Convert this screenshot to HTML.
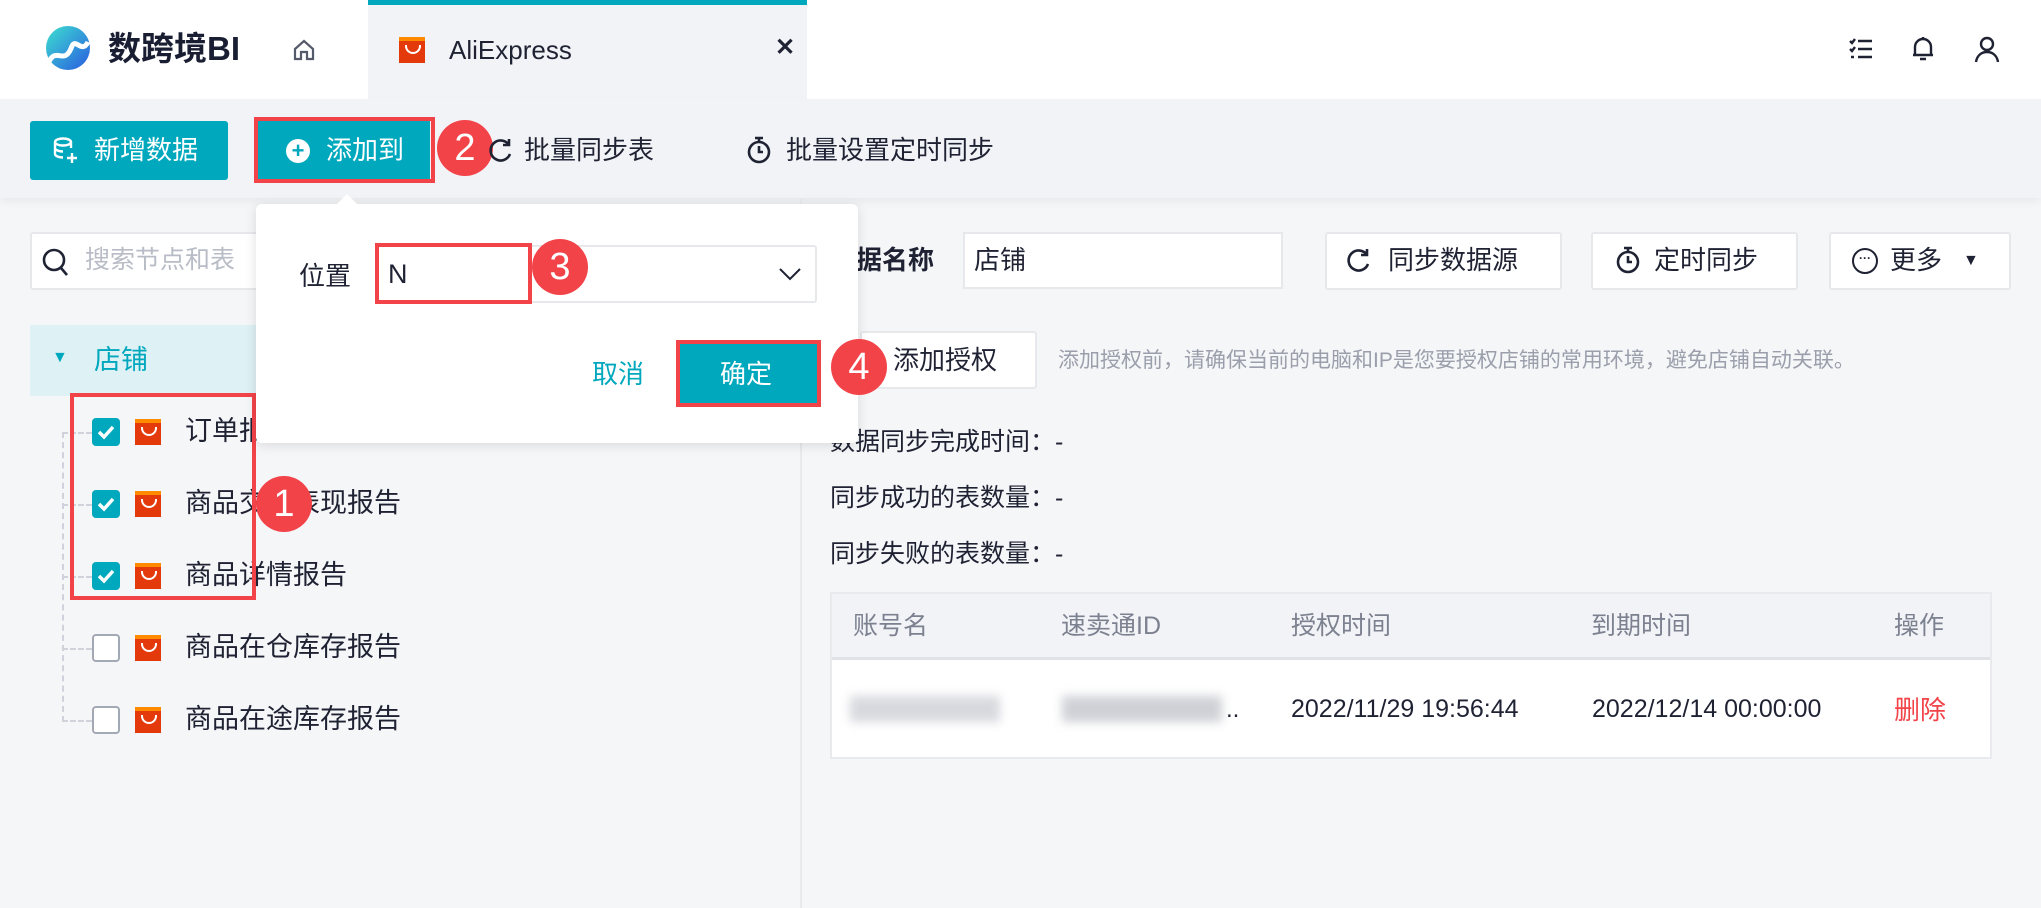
<!DOCTYPE html>
<html><head><meta charset="utf-8"><style>
*{box-sizing:border-box;margin:0;padding:0}
body{width:2041px;height:908px;overflow:hidden;background:#f5f6f8;font-family:"Liberation Sans","Noto Sans CJK SC",sans-serif;color:#1f2233;position:relative}
.a{position:absolute}
.t{position:absolute;white-space:nowrap;line-height:1}
.btnw{position:absolute;background:#fff;border:2px solid #e6e8ec;border-radius:3px}
.red{position:absolute;border:4px solid #f24349}
.circ{position:absolute;width:56px;height:56px;border-radius:50%;background:#f24349;color:#fff;font-size:38px;text-align:center;line-height:56px}
.cb{position:absolute;width:28px;height:28px;border-radius:4px;background:#00a8bd}
.cbu{position:absolute;width:28px;height:28px;border-radius:4px;border:2px solid #a2a8b4;background:#fff}
.ae{position:absolute;width:26px;height:26px;background:#e43a0b;border-top:4px solid #ff8a00}
.ae:after{content:"";position:absolute;left:6px;top:4px;width:12px;height:7px;border:2px solid #fff;border-top:none;border-radius:0 0 8px 8px}
</style></head><body>
<div class="a" style="left:0;top:0;width:2041px;height:99px;background:#fff"></div>
<svg class="a" style="left:42px;top:24px" width="50" height="52" viewBox="0 0 50 52"><defs><linearGradient id="g" x1="0" y1="0" x2="1" y2="1"><stop offset="0" stop-color="#3de0d0"/><stop offset="1" stop-color="#2a5be0"/></linearGradient></defs><circle cx="26" cy="24" r="22" fill="url(#g)"/><path d="M6 40 C14 20 22 44 30 22 C34 14 40 30 46 18" stroke="#fff" stroke-width="5" fill="none"/></svg>
<div class="t" style="left:108px;top:32px;font-size:33px;font-weight:bold;color:#1a1e33">数跨境BI</div>
<svg class="a" style="left:292px;top:38px" width="24" height="24" viewBox="0 0 24 24"><path d="M3 11 L12 3 L21 11 V21 H15 V14 H9 V21 H3 Z" fill="none" stroke="#555b6b" stroke-width="2.2"/></svg>
<div class="a" style="left:368px;top:0;width:439px;height:99px;background:#f2f3f7;border-top:5px solid #00a8bd"></div>
<div class="ae" style="left:399px;top:37px"></div>
<div class="t" style="left:449px;top:37px;font-size:26px">AliExpress</div>
<div class="t" style="left:775px;top:36px;font-size:24px;font-weight:bold">✕</div>
<svg class="a" style="left:1848px;top:36px" width="26" height="26" viewBox="0 0 26 26" stroke="#1f2233" stroke-width="2.4" fill="none"><path d="M10 5H24M10 13H24M10 21H24M2 5l2 2 3-4M2 13l2 2 3-4M3 21h3"/></svg>
<svg class="a" style="left:1911px;top:35px" width="24" height="28" viewBox="0 0 24 28" stroke="#1f2233" stroke-width="2.4" fill="none"><path d="M4 20V12a8 8 0 0 1 16 0v8H2h20M9 24h6M12 2v2"/></svg>
<svg class="a" style="left:1974px;top:35px" width="26" height="28" viewBox="0 0 26 28" stroke="#1f2233" stroke-width="2.4" fill="none"><circle cx="13" cy="9" r="6"/><path d="M2 27c1-7 6-10 11-10s10 3 11 10"/></svg>
<div class="a" style="left:0;top:99px;width:2041px;height:99px;background:#f2f3f7;box-shadow:0 4px 8px rgba(0,0,0,.05)"></div>
<div class="a" style="left:30px;top:121px;width:198px;height:59px;background:#00a8bd;border-radius:3px"></div>
<svg class="a" style="left:52px;top:136px" width="28" height="30" viewBox="0 0 28 30" stroke="#fff" stroke-width="2.4" fill="none"><ellipse cx="11" cy="6" rx="8" ry="3.5"/><path d="M3 6v12c0 2 4 3.5 8 3.5M19 6v6M3 12c0 2 4 3.5 8 3.5M20 17v10M15 22h10"/></svg>
<div class="t" style="left:94px;top:137px;font-size:26px;color:#fff">新增数据</div>
<div class="a" style="left:258px;top:121px;width:172px;height:59px;background:#00a8bd"></div>
<div class="red" style="left:254px;top:117px;width:181px;height:66px"></div>
<div class="a" style="left:286px;top:139px;width:24px;height:24px;border-radius:50%;background:#fff;color:#00a8bd;font-size:22px;font-weight:bold;text-align:center;line-height:24px">+</div>
<div class="t" style="left:326px;top:137px;font-size:26px;color:#fff">添加到</div>
<div class="circ" style="left:437px;top:120px">2</div>
<svg class="a" style="left:488px;top:136px" width="26" height="28" viewBox="0 0 26 28" stroke="#1f2233" stroke-width="2.6" fill="none"><path d="M21 9a10 10 0 1 0 1 9M21 3v6h-6"/></svg>
<div class="t" style="left:524px;top:137px;font-size:26px">批量同步表</div>
<svg class="a" style="left:746px;top:135px" width="26" height="30" viewBox="0 0 26 30" stroke="#1f2233" stroke-width="2.6" fill="none"><circle cx="13" cy="17" r="10"/><path d="M9 3h8M13 3v4M13 11v6h4"/></svg>
<div class="t" style="left:786px;top:137px;font-size:26px">批量设置定时同步</div>
<div class="a" style="left:800px;top:198px;width:2px;height:710px;background:#e8eaee"></div>
<div class="a" style="left:30px;top:232px;width:240px;height:58px;background:#fff;border:2px solid #e6e8ec;border-radius:3px"></div>
<svg class="a" style="left:42px;top:248px" width="28" height="30" viewBox="0 0 28 30" stroke="#1f2233" stroke-width="2.6" fill="none"><circle cx="12" cy="12" r="10"/><path d="M19 20l6 7"/></svg>
<div class="t" style="left:85px;top:248px;font-size:25px;color:#b8bcc6">搜索节点和表</div>
<div class="a" style="left:30px;top:325px;width:240px;height:71px;background:#def1f5"></div>
<div class="t" style="left:52px;top:350px;font-size:16px;color:#00a8bd">▼</div>
<div class="t" style="left:94px;top:347px;font-size:27px;color:#00a8bd">店铺</div>
<div class="a" style="left:62px;top:432px;width:0;height:290px;border-left:2px dashed #cfd2da"></div>
<div class="a" style="left:62px;top:432px;width:30px;border-top:2px dashed #cfd2da"></div>
<div class="a" style="left:62px;top:504px;width:30px;border-top:2px dashed #cfd2da"></div>
<div class="a" style="left:62px;top:576px;width:30px;border-top:2px dashed #cfd2da"></div>
<div class="a" style="left:62px;top:648px;width:30px;border-top:2px dashed #cfd2da"></div>
<div class="a" style="left:62px;top:720px;width:30px;border-top:2px dashed #cfd2da"></div>
<div class="cb" style="left:92px;top:418px"><svg width="28" height="28" viewBox="0 0 28 28"><path d="M7 14l5 5 9-10" stroke="#fff" stroke-width="3.5" fill="none"/></svg></div>
<div class="cb" style="left:92px;top:490px"><svg width="28" height="28" viewBox="0 0 28 28"><path d="M7 14l5 5 9-10" stroke="#fff" stroke-width="3.5" fill="none"/></svg></div>
<div class="cb" style="left:92px;top:562px"><svg width="28" height="28" viewBox="0 0 28 28"><path d="M7 14l5 5 9-10" stroke="#fff" stroke-width="3.5" fill="none"/></svg></div>
<div class="cbu" style="left:92px;top:634px"></div>
<div class="cbu" style="left:92px;top:706px"></div>
<div class="ae" style="left:135px;top:419px"></div>
<div class="ae" style="left:135px;top:491px"></div>
<div class="ae" style="left:135px;top:563px"></div>
<div class="ae" style="left:135px;top:635px"></div>
<div class="ae" style="left:135px;top:707px"></div>
<div class="t" style="left:185px;top:418px;font-size:27px">订单报告</div>
<div class="t" style="left:185px;top:490px;font-size:27px">商品交易表现报告</div>
<div class="t" style="left:185px;top:562px;font-size:27px">商品详情报告</div>
<div class="t" style="left:185px;top:634px;font-size:27px">商品在仓库存报告</div>
<div class="t" style="left:185px;top:706px;font-size:27px">商品在途库存报告</div>
<div class="red" style="left:70px;top:393px;width:186px;height:207px"></div>
<div class="circ" style="left:256px;top:476px">1</div>
<div class="t" style="left:830px;top:247px;font-size:26px;font-weight:bold">数据名称</div>
<div class="a" style="left:963px;top:232px;width:320px;height:57px;background:#fff;border:2px solid #e6e8ec"></div>
<div class="t" style="left:974px;top:247px;font-size:26px">店铺</div>
<div class="btnw" style="left:1325px;top:232px;width:237px;height:58px"></div>
<svg class="a" style="left:1346px;top:246px" width="26" height="28" viewBox="0 0 26 28" stroke="#1f2233" stroke-width="2.6" fill="none"><path d="M21 9a10 10 0 1 0 1 9M21 3v6h-6"/></svg>
<div class="t" style="left:1388px;top:247px;font-size:26px">同步数据源</div>
<div class="btnw" style="left:1591px;top:232px;width:207px;height:58px"></div>
<svg class="a" style="left:1615px;top:245px" width="26" height="30" viewBox="0 0 26 30" stroke="#1f2233" stroke-width="2.6" fill="none"><circle cx="13" cy="17" r="10"/><path d="M9 3h8M13 3v4M13 11v6h4"/></svg>
<div class="t" style="left:1654px;top:247px;font-size:26px">定时同步</div>
<div class="btnw" style="left:1829px;top:232px;width:182px;height:58px"></div>
<div class="a" style="left:1852px;top:248px;width:26px;height:26px;border:2.4px solid #1f2233;border-radius:50%;font-size:12px;text-align:center;line-height:16px;font-weight:bold">···</div>
<div class="t" style="left:1890px;top:247px;font-size:26px">更多</div>
<div class="t" style="left:1963px;top:253px;font-size:16px">▼</div>
<div class="btnw" style="left:860px;top:331px;width:177px;height:58px"></div>
<div class="t" style="left:893px;top:347px;font-size:26px">添加授权</div>
<div class="t" style="left:1058px;top:350px;font-size:21px;color:#9a9fab">添加授权前，请确保当前的电脑和IP是您要授权店铺的常用环境，避免店铺自动关联。</div>
<div class="t" style="left:830px;top:430px;font-size:25px">数据同步完成时间：-</div>
<div class="t" style="left:830px;top:486px;font-size:25px">同步成功的表数量：-</div>
<div class="t" style="left:830px;top:542px;font-size:25px">同步失败的表数量：-</div>
<div class="a" style="left:830px;top:592px;width:1162px;height:167px;background:#fff;border:2px solid #e8eaee"></div>
<div class="a" style="left:832px;top:594px;width:1158px;height:66px;background:#f2f3f7;border-bottom:3px solid #e0e2e8"></div>
<div class="t" style="left:853px;top:614px;font-size:25px;color:#7c8190">账号名</div>
<div class="t" style="left:1061px;top:614px;font-size:25px;color:#7c8190">速卖通ID</div>
<div class="t" style="left:1291px;top:614px;font-size:25px;color:#7c8190">授权时间</div>
<div class="t" style="left:1591px;top:614px;font-size:25px;color:#7c8190">到期时间</div>
<div class="t" style="left:1894px;top:614px;font-size:25px;color:#7c8190">操作</div>
<div class="a" style="left:850px;top:696px;width:150px;height:26px;background:#d8d9de;filter:blur(5px)"></div>
<div class="a" style="left:1062px;top:696px;width:160px;height:26px;background:#d0d1d6;filter:blur(5px)"></div>
<div class="t" style="left:1226px;top:698px;font-size:24px">..</div>
<div class="t" style="left:1291px;top:697px;font-size:25px">2022/11/29 19:56:44</div>
<div class="t" style="left:1592px;top:697px;font-size:25px">2022/12/14 00:00:00</div>
<div class="t" style="left:1894px;top:697px;font-size:26px;color:#f24349">删除</div>
<div class="a" style="left:256px;top:204px;width:602px;height:239px;background:#fff;border-radius:6px;box-shadow:0 2px 12px rgba(0,0,0,.12)"></div>
<div class="a" style="left:335px;top:194px;width:0;height:0;border-left:12px solid transparent;border-right:12px solid transparent;border-bottom:12px solid #fff"></div>
<div class="t" style="left:299px;top:263px;font-size:26px">位置</div>
<div class="a" style="left:375px;top:245px;width:442px;height:58px;border:2px solid #e6e8ec;border-radius:3px"></div>
<div class="t" style="left:388px;top:261px;font-size:27px">N</div>
<svg class="a" style="left:778px;top:266px" width="24" height="16" viewBox="0 0 24 16" stroke="#1f2233" stroke-width="2" fill="none"><path d="M2 3l10 10 10-10"/></svg>
<div class="red" style="left:375px;top:243px;width:157px;height:61px"></div>
<div class="circ" style="left:532px;top:239px">3</div>
<div class="t" style="left:592px;top:361px;font-size:26px;color:#00a8bd">取消</div>
<div class="a" style="left:680px;top:344px;width:137px;height:60px;background:#00a8bd"></div>
<div class="t" style="left:720px;top:361px;font-size:26px;color:#fff">确定</div>
<div class="red" style="left:676px;top:340px;width:145px;height:67px"></div>
<div class="circ" style="left:831px;top:339px">4</div>
</body></html>
